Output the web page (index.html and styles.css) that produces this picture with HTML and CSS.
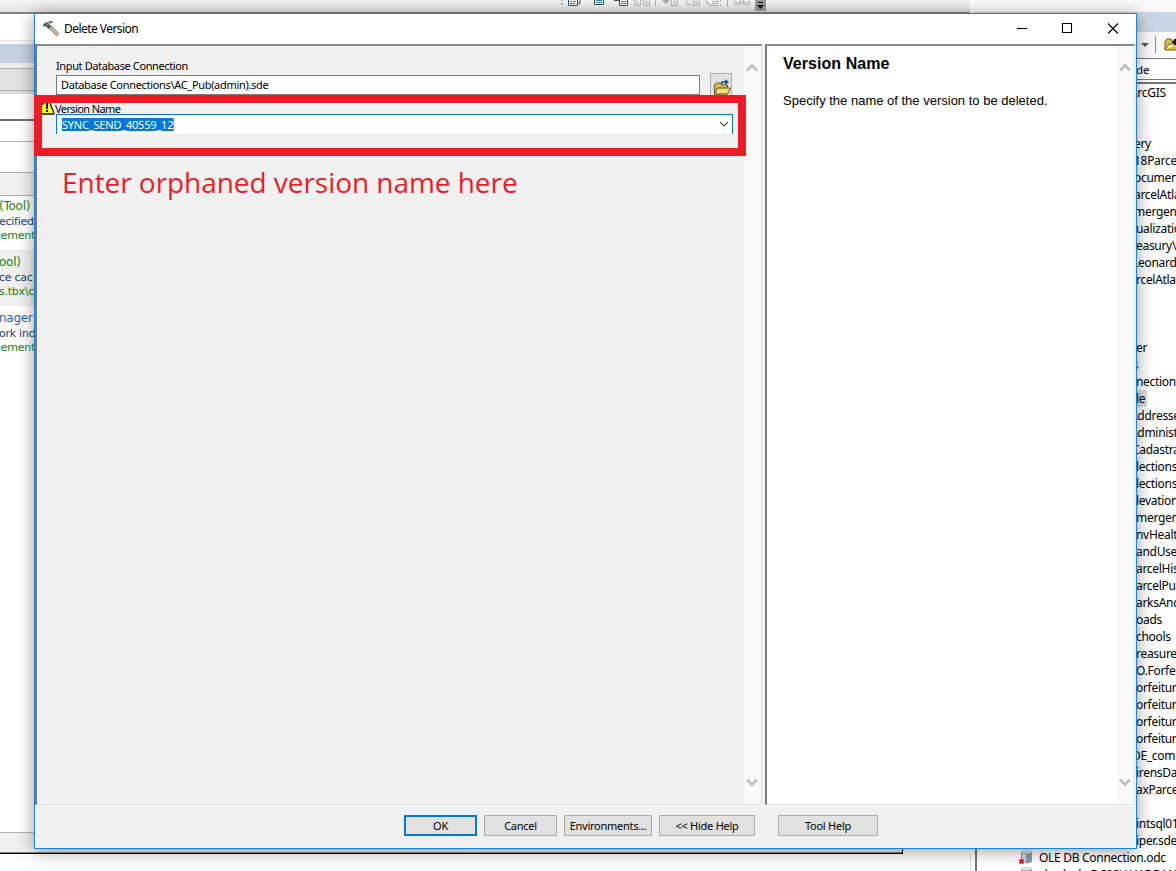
FILE: index.html
```html
<!DOCTYPE html>
<html lang="en">
<head>
<meta charset="utf-8">
<title>Delete Version</title>
<link rel="stylesheet" href="styles.css">
</head>
<body>
<div class="desktop">
  <div class="main-app">
    <div class="app-toolbar">
      <svg class="toolbar-icons" width="206" height="12" viewBox="0 0 206 12">
        <g fill="#aaa"><rect x="1" width="2" height="1"/><rect x="1" y="3" width="2" height="2"/></g>
        <g fill="#fff" stroke="#444b57"><path d="M17 3.500h3v-4"/><path d="M8.500-1v6.500h9V-1zM34.500-2v6.500h9V-2zM54 .5h5M59.500-1v6.500h8V-1z"/></g>
        <path d="M10 1.500h2M13 1.500h3M10 3.500h5M36 .5h6M36 2.500h6M61 1.500h5M61 3.500h5" stroke="#2b7ec6"/>
        <g fill="none" stroke="#b5b5b5"><path d="M74.500-1v6.500h6V-1M83.500-1v6.500h6V-1M76 1.500h2M76 3.500h3M85 1.500h3M85 3.500h3M111.500-1v6.500h6V-1M113 1.500h3M113 3.500h3M133.500-1v6.500h6V-1M135 1.500h3M135 3.500h3M126.500-1v5.500h5M146.500-1v4.500h3v2h8V-1M152 1.500h4M152 3.500h4M160.500-1v3M160.500 4v2M174.500-1v5.500h6V-1M183.500-1v5.500h6V-1M176 2.500h12"/></g>
        <path d="M102 0h8l-4 4z" fill="#aaa"/>
        <path d="M95.500 0v6M167.500 0v6" stroke="#aaa"/>
        <path d="M195 0h11v11h-11z" fill="#999"/><path d="M198 2h5v1h-5zM197 5h7l-3.500 4z" fill="#111"/>
      </svg>
    </div>
    <div class="search-pane">
      <div class="sp-title"></div><div class="sp-caption"></div><div class="sp-tabs"></div>
      <div class="sp-tools"></div><div class="sp-input"></div><div class="sp-types"></div><div class="sp-status"></div>
      <div class="result"><b class="green large">(Tool)</b><b class="navy">ecified</b><b class="green cut-g">gement</b></div>
      <div class="result shaded"><b class="green large">ool)</b><b class="navy">ce cac</b><b class="green">s.tbx\c</b></div>
      <div class="result"><b class="blue large">nager</b><b class="navy">ork ind</b><b class="green cut-g">gement</b></div>
      <div class="sp-fill"></div>
      <div class="sp-footer"></div>
    </div>
    <div class="pane-edge"></div>
  </div>
  <div class="catalog">
    <div class="cat-top"></div>
    <div class="cat-title"></div>
    <div class="cat-toolbar">
      <svg width="40" height="26" viewBox="0 0 40 26"><path d="M5 11h8l-4 4z" fill="#555"/><path d="M19.500 4v17" stroke="#888"/><path d="M29 18V9l2-2h4l1 2h6v9z" fill="#d8bd48" stroke="#746018"/><path d="M29 18l4-6h9" fill="#ffed99" stroke="#6c5817"/><path d="M36 10h6M39 7v6" stroke="#111" stroke-width="2"/></svg>
    </div>
    <div class="cat-location">de</div>
    <div class="tree">
      <p class="cut">ArcGIS</p><p></p><p></p><p class="nudge">ery</p><p class="nudge">18Parce</p><p class="nudge">ocument</p><p class="nudge">arcelAtla</p><p class="nudge">mergenc</p><p>ualizatio</p><p>easury\A</p><p class="nip">Leonard</p><p>rcelAtlas</p><p></p><p></p><p></p><p>er</p><p class="link">s</p><p>nection</p><p><span class="selected">le</span></p><p class="cut">Addresse</p><p class="cut">Administ</p><p class="nip">Cadastra</p><p>lections</p><p>lections</p><p>levation</p><p>mergen</p><p>nvHealt</p><p>andUse</p><p>arcelHis</p><p>arcelPu</p><p>arksAnd</p><p>oads</p><p>chools</p><p>reasure</p><p>O.Forfe</p><p>orfeitur</p><p>orfeitur</p><p>orfeitur</p><p>orfeitur</p><p class="nip">DE_com</p><p>irensDat</p><p>axParce</p><p></p><p>intsql01</p><p>iper.sde</p>
      <p class="entry"><svg width="16" height="17" viewBox="0 0 16 17"><path d="M3 2v10c0 3 11 3 11 0V2z" fill="#8999ac"/><ellipse cx="8.500" cy="2.500" rx="5.500" ry="2" fill="#dae3ed"/><path d="M4 5v7q2 2 4 2V5" fill="#cad5e0"/><path d="M1.500 10.500l4 4M5.500 10.500l-4 4" stroke="#d11" stroke-width="1.800"/></svg><span>OLE DB Connection.odc</span></p>
      <p class="entry"><svg width="16" height="17" viewBox="0 0 16 17"><path d="M3 2v10h11V2z" fill="#8999ac"/><ellipse cx="8.500" cy="2.500" rx="5.500" ry="2" fill="#dae3ed"/></svg><span>sharly de.DC02V.HADBAN</span></p>
    </div>
  </div>
</div>

<main class="dialog">
  <header class="titlebar">
    <svg class="hammer" width="18" height="18" viewBox="0 0 18 18"><path d="M7 6l9 9" stroke="#706756" stroke-width="3.600"/><path d="M7 6l9 9" stroke="#d2c7b2" stroke-width="1.800"/><path d="M1 5l3-3 6-1 1 1-4 2 2 3-3 2-2-3-2 1z" fill="#4f5656"/><path d="M4 3l4-1-3 3" fill="none" stroke="#a7b0b0"/></svg>
    <span class="title">Delete Version</span>
    <svg class="controls" width="104" height="12" viewBox="0 0 104 12"><g fill="none" stroke="#000" stroke-width="1.100"><path d="M0 5.500h10"/><path d="M45.500.5h9v9h-9zM91 .5l10 10M101 .5l-10 10"/></g></svg>
  </header>
  <div class="panels">
    <section class="parameters">
      <div class="form">
        <label class="field-label"><span>Input Database Connection</span></label>
        <div class="db-row">
          <div class="db-input"><span>Database Connections\AC_Pub(admin).sde</span></div>
          <div class="browse"><svg width="18" height="17" viewBox="0 0 18 17"><path d="M1.500 15V6l2-2h4l1 2h6v9z" fill="#d9bc4b" stroke="#685516"/><path d="M1.500 15l3-6h13l-3 6z" fill="#f4da78" stroke="#685516"/><path d="M9 5V3h4" fill="none" stroke="#07569b" stroke-width="1.500"/><path d="M12 0l4 3-4 3z" fill="#07569b"/></svg></div>
        </div>
        <div class="version-label">
          <svg width="13" height="13" viewBox="0 0 13 13"><path d="M0 12V3L2.500 0h5L12 11v1z" fill="#ff0"/><path d="M7.500 0L12 11M0 12h12.500M0 3l2-3" fill="none" stroke="#111" stroke-width="1.300"/><path d="M5 1v6M5 8v2" stroke="#111" stroke-width="2"/></svg>
          <span>Version Name</span>
        </div>
        <div class="combo"><span class="selection">SYNC_SEND_40559_12</span><svg width="10" height="7" viewBox="0 0 10 7"><path d="M1 1l4 4 4-4" fill="none" stroke="#555" stroke-width="1.200"/></svg></div>
      </div>
      <div class="scrollbar"><svg width="12" height="10" viewBox="0 0 12 10"><path d="M1 7.500l5-5 5 5" fill="none" stroke="#c0c0c0" stroke-width="2.800"/></svg><svg width="12" height="10" viewBox="0 0 12 10"><path d="M1 2.500l5 5 5-5" fill="none" stroke="#c0c0c0" stroke-width="2.800"/></svg></div>
    </section>
    <section class="help">
      <article><h1>Version Name</h1><p>Specify the name of the version to be deleted.</p></article>
      <div class="scrollbar"><svg width="12" height="10" viewBox="0 0 12 10"><path d="M1 7.500l5-5 5 5" fill="none" stroke="#c0c0c0" stroke-width="2.800"/></svg><svg width="12" height="10" viewBox="0 0 12 10"><path d="M1 2.500l5 5 5-5" fill="none" stroke="#c0c0c0" stroke-width="2.800"/></svg></div>
    </section>
  </div>
  <footer class="actions">
    <button class="ok">OK</button><button>Cancel</button><button class="env">Environments...</button><button class="hide">&lt;&lt; Hide Help</button><button class="tool-help">Tool Help</button>
  </footer>
</main>
<div class="callout-box"></div>
<div class="callout-text">Enter orphaned version name here</div>
</body>
</html>
```

FILE: styles.css
```css
* { box-sizing: border-box; }
body { margin: 0; width: 1176px; height: 871px; overflow: hidden; position: relative; background: #fcfdfd; font-family: "Noto Sans", "Open Sans", sans-serif; font-size: 11px; color: #000; }
svg { display: block; flex: none; }
.desktop { display: flex; width: 1176px; height: 871px; overflow: hidden; }
.main-app { width: 975px; flex: none; display: flex; flex-direction: column; }
.app-toolbar { height: 14px; width: 970px; background: linear-gradient(#f4f4f4, #e4e4e4); border-bottom: 2px solid #858585; padding-left: 560px; flex: none; }
.search-pane { width: 903px; height: 840px; display: flex; flex-direction: column; background: #fff; border-bottom: 1px solid #000; border-right: 1px solid #000; flex: none; }
.search-pane > div { flex: none; }
.sp-title { height: 27px; border-bottom: 1px solid #e4e4e4; }
.sp-caption { height: 27px; background: #c5d1df; border-top: 3px solid #f7f7f7; border-bottom: 5px solid #f0f0f0; }
.sp-tabs { height: 23px; background: #e1e1e1; border-top: 1px solid #aaa; border-bottom: 1px solid #b0b0b0; }
.sp-tools { height: 30px; border-top: 3px solid #ddd; border-bottom: 2px solid #6b6b6b; }
.sp-input { height: 21px; border-bottom: 1px solid #b0b0b0; }
.sp-types { height: 31px; border-bottom: 1px solid #b0b0b0; }
.sp-status { height: 23px; background: #f0f0f0; border-bottom: 1px solid #b0b0b0; }
.result { height: 53px; padding-top: 3px; font-family: "DejaVu Sans", sans-serif; font-size: 11px; letter-spacing: -.25px; }
.result b { display: block; font-weight: 400; line-height: 15px; height: 14.5px; white-space: nowrap; text-indent: -1px; }
.result .large { font-size: 12px; }
.result .cut-g { text-indent: -6px; }
.shaded { background: #f0f0f0; height: 57px; padding-top: 6px; }
.shaded + .result { padding-top: 5px; }
.green { color: #158315; } .navy { color: #1b3b79; } .blue { color: #2463c3; }
.search-pane > .sp-fill { flex: 1 1 0; }
.sp-footer { height: 21px; background: #f0f0f0; border-top: 1px solid #b0b0b0; border-bottom: 1px solid #808080; }
.pane-edge { flex: 1; width: 971px; border-right: 1px solid #ddd; }
.catalog { width: 201px; flex: none; background: #fff; display: flex; flex-direction: column; }
.catalog > div { flex: none; }
.cat-top { height: 12px; background: #f9f9f9; }
.cat-title { height: 20px; background: #c9d6e4; }
.cat-toolbar { height: 26px; background: #f8f8f8; padding-left: 161px; }
.cat-location { height: 22px; border-top: 1px solid #777; border-bottom: 1px solid #777; padding-left: 161px; line-height: 22px; font-size: 11.5px; }
.tree { border-top: 2px solid #777; border-left: 2px solid #777; margin-top: 2px; padding: 0 0 0 159px; font-size: 12px; letter-spacing: -.3px; }
.tree p { height: 17px; line-height: 17px; margin: 0; white-space: nowrap; }
.tree .cut { text-indent: -6px; } .tree .nip { text-indent: -4px; } .tree .nudge { text-indent: -2px; }
.tree .link { color: #1478b4; text-indent: -3px; }
.selected { display: inline-block; background: #ddd; padding-right: 2px; }
.tree .entry { margin-left: -118px; display: flex; gap: 5px; }

.dialog { position: absolute; left: 34px; top: 13px; width: 1103px; height: 836px; background: #f0f0f0; border: 1px solid #1883d7; box-shadow: 0 2px 16px rgba(0,0,0,.4); display: flex; flex-direction: column; }
.titlebar { height: 30px; background: #fff; display: flex; align-items: center; padding: 0 15px 0 7px; font-size: 12px; }
.title { margin: -2px 0 0 4px; letter-spacing: -.55px; }
.controls { margin-left: auto; }
.panels { display: flex; height: 761px; gap: 3px; background: #f7f7f7; }
.parameters, .help { display: flex; height: 761px; border: 2px solid; border-color: #888 #ddd #ddd #777; border-right-width: 1px; border-bottom-width: 1px; }
.parameters { width: 727px; background: #f0f0f0; }
.help { width: 370px; background: #fff; }
.form { flex: 1; min-width: 0; padding-top: 12px; }
.scrollbar { width: 17px; background: #f9f9f9; display: flex; flex-direction: column; justify-content: space-between; align-items: center; padding: 17px 1px 17px 0; }
.field-label { display: block; padding-left: 19px; height: 15px; line-height: 16px; letter-spacing: -.38px; }
.db-row { display: flex; gap: 10px; height: 29px; padding-left: 19px; }
.db-input { width: 644px; height: 20px; background: #fff; border: 1px solid #7a7a7a; margin-top: 2px; padding-left: 4px; line-height: 18px; letter-spacing: -.32px; }
.browse { width: 22px; height: 25px; background: #e1e1e1; border: 1px solid #adadad; padding: 5px 1px 0 2px; }
.version-label { height: 12px; display: flex; align-items: center; padding-left: 5px; gap: 0; letter-spacing: -.6px; }
.combo { width: 677px; height: 20px; background: #fff; border: 1px solid #0078d7; border-bottom: 0; margin-left: 19px; display: flex; align-items: center; justify-content: space-between; padding: 0 3px 1px 5px; }
.selection { background: #0078d7; color: #fff; line-height: 13px; height: 13px; border-right: 1px solid #ff8728; letter-spacing: -.2px; }
.help article { flex: 1; padding: 9px 0 0 16px; font-family: "Liberation Sans", Arial, sans-serif; }
.help h1 { font-size: 16px; line-height: 18px; margin: 0 0 20px; letter-spacing: .05px; }
.help article p { margin: 0; font-size: 13px; line-height: 16px; }
.actions { flex: 1; border-top: 1px solid #fff; display: flex; gap: 7px; padding: 9px 0 0 369px; }
.actions button { width: 73px; height: 21px; border: 1px solid #adadad; background: #e1e1e1; padding: 0; font: 11px/19px "Noto Sans", sans-serif; letter-spacing: -.25px; }
.actions .ok { border: 2px solid #0078d7; line-height: 17px; }
.actions .env { width: 88px; } .actions .hide { width: 96px; } .actions .tool-help { width: 100px; margin-left: 16px; }
.callout-box { position: absolute; left: 34px; top: 95px; width: 712px; height: 61px; border: 8px solid #ed1c24; }
.callout-text { position: absolute; left: 62px; top: 163px; font: 28px/38px "Open Sans", sans-serif; letter-spacing: -.05px; color: #ed1c24; white-space: nowrap; }
```
